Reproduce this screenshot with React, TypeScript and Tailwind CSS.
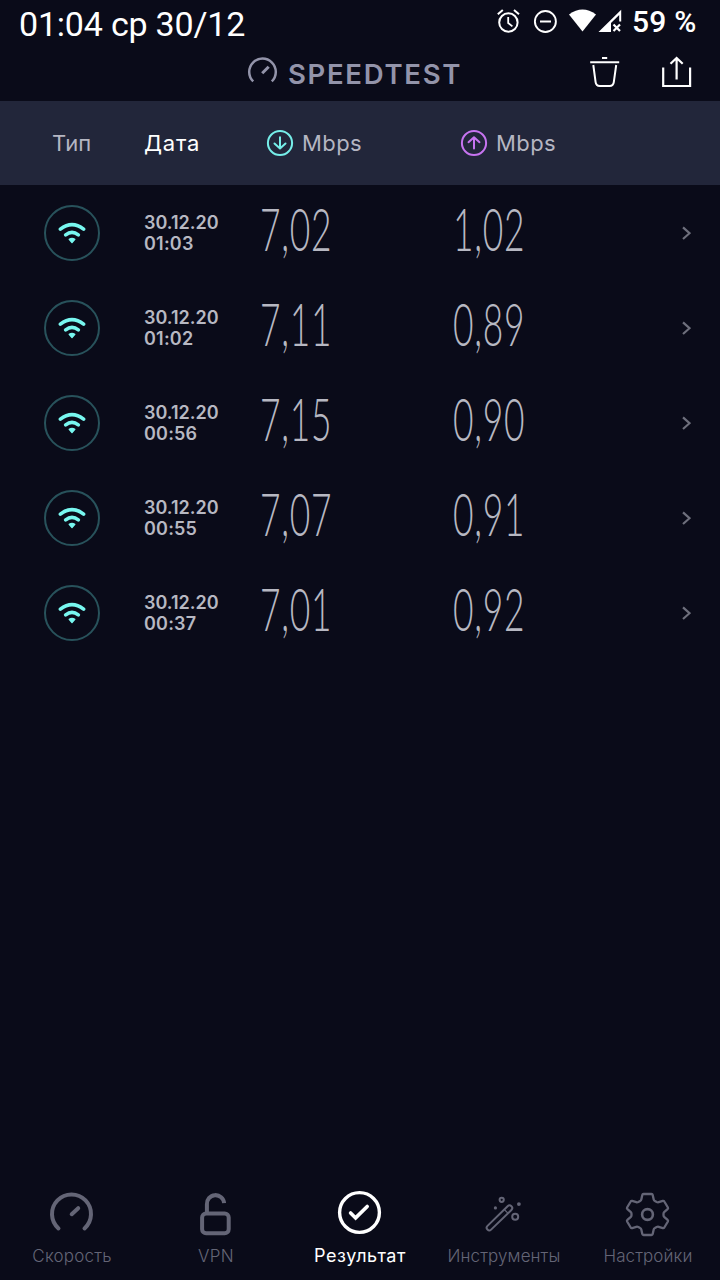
import React, { useState } from "react";

const results = [
	{ date: "30.12.20", time: "01:03", download: "7,02", upload: "1,02" },
	{ date: "30.12.20", time: "01:02", download: "7,11", upload: "0,89" },
	{ date: "30.12.20", time: "00:56", download: "7,15", upload: "0,90" },
	{ date: "30.12.20", time: "00:55", download: "7,07", upload: "0,91" },
	{ date: "30.12.20", time: "00:37", download: "7,01", upload: "0,92" },
];

function StatusIcons() {
	return (
		<svg width="126" height="28" viewBox="496 8 126 28" fill="none" stroke="white">
			{/* Alarm */}
			<circle cx="508.4" cy="22.5" r="9.2" strokeWidth="2" />
			<path d="M508.2 17v6l4.2 3.4" strokeWidth="1.8" />
			<path d="M497.8 14.2l5-4.2M519 14.2l-5-4.2" strokeWidth="2" />
			{/* Do not disturb */}
			<circle cx="545.4" cy="21.5" r="10.5" strokeWidth="1.9" />
			<path d="M540 21.5h11" strokeWidth="2" />
			{/* Wi-Fi */}
			<path
				d="M569 14.5Q582.5 4.5 596 14.5L582.5 31.5z"
				fill="white"
				stroke="none"
			/>
			{/* Mobile signal */}
			<path
				d="M598.5 32L621.2 9.8V21.5h-2V15L611 23v9z"
				fill="white"
				stroke="none"
			/>
			<path d="M613.5 24.5l6.5 6.5M620 24.5l-6.5 6.5" strokeWidth="2.2" />
		</svg>
	);
}

function WifiIcon() {
	return (
		<svg
			width="28"
			height="22"
			viewBox="0 0 28 22"
			fill="none"
			stroke="#78f7f0"
			strokeWidth="3.7"
			strokeLinecap="round"
		>
			<path d="M2.4 7.1Q14 -1.9 25.6 7.1" />
			<path d="M7.7 12.9Q14 8 20.3 12.9" />
			<path
				d="M11.2 17.4Q14 15.6 16.8 17.4L14 20.5z"
				fill="#78f7f0"
				strokeWidth="1.4"
				strokeLinejoin="round"
			/>
		</svg>
	);
}

function DirectionIcon({ up = false }: { up?: boolean }) {
	return (
		<svg
			width="28"
			height="28"
			viewBox="0 0 28 28"
			fill="none"
			stroke={up ? "#c774f0" : "#76eee9"}
			strokeWidth="2"
			strokeLinecap="round"
			strokeLinejoin="round"
		>
			<circle cx="14" cy="14" r="12.1" />
			<path
				d={
					up
						? "M14 19.5V8.5M8.5 13.2L14 8.2l5.5 5"
						: "M14 8.2v11M8.5 14.5l5.5 5 5.5-5"
				}
			/>
		</svg>
	);
}

function SpeedIcon() {
	return (
		<svg width="46" height="46" viewBox="0.5 -0.9 46 46" fill="none" stroke="currentColor" strokeWidth="4" strokeLinecap="round">
			<path d="M10 36.6A19.5 19.5 0 1 1 36 36.6" />
			<path d="M23.2 22.3l6.5-6" />
		</svg>
	);
}

function VpnIcon() {
	return (
		<svg width="46" height="46" viewBox="0.5 -0.6 46 46" fill="none" stroke="currentColor" strokeWidth="4">
			<rect x="9.6" y="22" width="26.6" height="19.7" rx="4" />
			<path d="M14.4 22v-9.2a8.5 8.5 0 0 1 17.2-1.3" />
		</svg>
	);
}

function ResultIcon() {
	return (
		<svg className="overflow-visible" width="46" height="46" viewBox="0 -0.7 46 46" fill="none" stroke="currentColor" strokeWidth="3.4" strokeLinecap="round">
			<circle cx="22.5" cy="20.8" r="19.9" />
			<path d="M13.6 21.2l5 5L30.2 14.8" strokeWidth="3.6" />
		</svg>
	);
}

function ToolsIcon() {
	return (
		<svg width="46" height="46" viewBox="0 -0.6 46 46" fill="none" stroke="currentColor" strokeWidth="2">
			<path d="M6.5 34.3L26.6 14.6a2.6 2.6 0 0 1 3.8 3.8L10.1 38a2.55 2.55 0 0 1-3.6-3.7z" />
			<path d="M23.4 18l3.5 3.5" strokeWidth="1.3" />
			<circle cx="20.7" cy="8.2" r="2.1" />
			<circle cx="34.2" cy="25.1" r="3" />
			<circle cx="37.9" cy="12.5" r="1.9" fill="currentColor" stroke="none" />
			<circle cx="14.4" cy="16.3" r="1.6" fill="currentColor" stroke="none" />
		</svg>
	);
}

function SettingsIcon() {
	return (
		<svg width="46" height="46" viewBox="-22.5 -23.5 46 46" fill="none" stroke="currentColor" strokeWidth="2.3" strokeLinejoin="round">
			<path d="M-4 -20.5H4Q5 -20.5 5.2 -19.6L6.2 -15Q6.4 -14 7.4 -13.5L9.2 -12.5Q10.2 -12 11.2 -12.3L15.3 -13.6Q16.3 -13.9 16.8 -13L20.4 -7Q20.9 -6.1 20.1 -5.4L16.9 -2.6Q16 -1.8 16 -.8V.8Q16 1.8 16.9 2.6L20.1 5.4Q20.9 6.1 20.4 7L16.8 13Q16.3 13.9 15.3 13.6L11.2 12.3Q10.2 12 9.2 12.5L7.4 13.5Q6.4 14 6.2 15L5.2 19.6Q5 20.5 4 20.5H-4Q-5 20.5 -5.2 19.6L-6.2 15Q-6.4 14 -7.4 13.5L-9.2 12.5Q-10.2 12 -11.2 12.3L-15.3 13.6Q-16.3 13.9 -16.8 13L-20.4 7Q-20.9 6.1 -20.1 5.4L-16.9 2.6Q-16 1.8 -16 .8V-.8Q-16 -1.8 -16.9 -2.6L-20.1 -5.4Q-20.9 -6.1 -20.4 -7L-16.8 -13Q-16.3 -13.9 -15.3 -13.6L-11.2 -12.3Q-10.2 -12 -9.2 -12.5L-7.4 -13.5Q-6.4 -14 -6.2 -15L-5.2 -19.6Q-5 -20.5 -4 -20.5z" />
			<circle r="5.4" strokeWidth="2.6" />
		</svg>
	);
}

const tabs = [
	{ label: "Скорость", Icon: SpeedIcon, spacing: "tracking-[0.2px]" },
	{ label: "VPN", Icon: VpnIcon, spacing: "tracking-[0.3px]" },
	{ label: "Результат", Icon: ResultIcon, spacing: "tracking-[0.6px]" },
	{ label: "Инструменты", Icon: ToolsIcon, spacing: "tracking-[0.1px]" },
	{ label: "Настройки", Icon: SettingsIcon, spacing: "tracking-[0.1px]" },
];

export default function App() {
	const [activeTab, setActiveTab] = useState("Результат");

	return (
		<div className="flex h-[1280px] w-[720px] flex-col overflow-hidden bg-[#0a0b19] font-['Inter',sans-serif]">
			{/* Status bar */}
			<div className="flex h-[45px] shrink-0 items-start justify-between pl-[19px] pr-6 font-['Roboto',sans-serif] text-white">
				<span className="pt-[4px] text-[34px] leading-[40px] tracking-[-0.2px]">
					01:04 ср 30/12
				</span>
				<div className="flex items-start gap-[10px]">
					<div className="pt-2">
						<StatusIcons />
					</div>
					<span className="w-[64px] pt-[4px] whitespace-nowrap text-[30px] leading-[36px] font-medium tracking-[0.2px]">
						59 %
					</span>
				</div>
			</div>

			{/* App bar */}
			<header className="flex h-[56px] shrink-0 items-start pl-[247px] pr-[28px]">
				<svg className="mt-[11px]" width="31" height="30" viewBox="0 0 31 30" fill="none" stroke="#9394aa" strokeWidth="2.5">
					<path d="M6.2 25.4A13.3 13.3 0 1 1 24.8 25.4" />
					<path d="M15.2 17.2l6.5-6.5" strokeWidth="3" />
				</svg>
				<h1 className="ml-[10px] w-[173px] pt-[12px] text-[27.5px] leading-[34px] font-semibold tracking-[1.7px] whitespace-nowrap text-[#9394aa]">
					SPEEDTEST
				</h1>
				<button type="button" aria-label="Delete" className="ml-[127px] pt-[10px]">
					<svg width="34" height="34" viewBox="588 55 34 34" fill="none" stroke="white" strokeWidth="2">
						<path d="M590.2 62.2h29M602 58h5.2" />
						<path d="M593.3 65l2.3 17.2q.5 3.8 4.2 3.8h9.8q3.7 0 4.2-3.8L616.2 65" />
					</svg>
				</button>
				<button type="button" aria-label="Share" className="ml-auto pt-[10px]">
					<svg width="32" height="34" viewBox="660 55 32 34" fill="none" stroke="white" strokeWidth="2.2">
						<path d="M663.2 67.5V86h26.9V67.5M676.6 79.5V58.5M670.5 63.8l6.1-5.8 6.1 5.8" />
					</svg>
				</button>
			</header>

			{/* Column titles */}
			<div className="grid h-[84px] shrink-0 grid-cols-[144px_122px_194px_1fr] items-center bg-[#22263a] text-[22px] text-[#b5b6c2]">
				<span className="pl-[52px] tracking-[0.2px]">Тип</span>
				<span className="tracking-[0.8px] text-white">Дата</span>
				<span className="flex items-center gap-[8px] tracking-[0.4px]">
					<DirectionIcon />
					Mbps
				</span>
				<span className="flex items-center gap-[8px] tracking-[0.4px]">
					<DirectionIcon up />
					Mbps
				</span>
			</div>

			{/* Results */}
			<main className="flex-1">
				{results.map((result) => (
					<div
						key={result.time}
						className="grid h-[95px] grid-cols-[144px_116px_193px_1fr_38px] items-center text-[#b7b8c2]"
					>
						<div className="ml-[44px] flex size-[56px] items-center justify-center rounded-full border-2 border-[#28525b]">
							<WifiIcon />
						</div>
						<div className="text-[18px] leading-[21px] font-semibold">
							<div>{result.date}</div>
							<div className="tracking-[0.2px]">{result.time}</div>
						</div>
						<div className="origin-left scale-x-[0.6] pb-[7px] font-['Lato',sans-serif] text-[59px] leading-[60px] font-light tracking-[1.2px] whitespace-nowrap">
							{result.download}
						</div>
						<div className="origin-left scale-x-[0.6] pb-[7px] font-['Lato',sans-serif] text-[59px] leading-[60px] font-light tracking-[1.2px] whitespace-nowrap">
							{result.upload}
						</div>
						<svg width="9" height="14" viewBox="0 0 9 14" fill="none" stroke="#6e6f7c" strokeWidth="2.2">
							<path d="M1 1.4l6.5 5.8L1 13" />
						</svg>
					</div>
				))}
			</main>

			{/* Bottom navigation */}
			<nav className="grid h-[89px] shrink-0 grid-cols-5">
				{tabs.map(({ label, Icon, spacing }) => (
					<button
						key={label}
						type="button"
						onClick={() => setActiveTab(label)}
						className={`flex flex-col items-center ${
							activeTab === label ? "text-white" : "text-[#646576]"
						}`}
					>
						<Icon />
						<span
							className={`mt-[8px] leading-[22px] whitespace-nowrap ${spacing} ${
								activeTab === label ? "text-[18px] font-normal" : "text-[17px] font-light"
							}`}
						>
							{label}
						</span>
					</button>
				))}
			</nav>
		</div>
	);
}
